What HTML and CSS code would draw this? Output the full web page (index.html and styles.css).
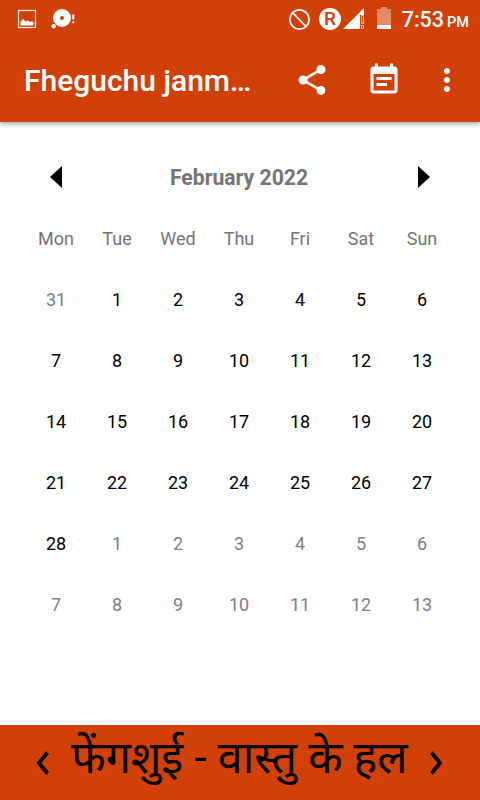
FILE: index.html
```html
<!DOCTYPE html>
<html lang="hi">
<head>
  <meta charset="UTF-8" />
  <meta name="viewport" content="width=device-width, initial-scale=1.0"/>
  <title>Fheguchu janm</title>
  <link rel="stylesheet" href="styles.css">
</head>
<body>

  <header class="header">
    <!-- STATUS BAR -->
    <div class="status-bar">
      <svg class="status-left" width="64" height="38" viewBox="0 0 64 38">
        <rect x="2.500" y="10.500" width="17" height="17" fill="none" stroke="#fff" stroke-opacity=".9" stroke-width="1.200"/>
        <path d="M4.500 25.500V21.500L7 19l2.500 2.500 2.500-1 2 1.500 2-1 1.500 1.500v3z" fill="#fff"/>
        <circle cx="46" cy="18" r="5.500" fill="none" stroke="#fff" stroke-width="7"/>
        <circle cx="37.700" cy="26.300" r="2.200" fill="#fff"/>
        <path d="M57.300 14.500v5M57.300 21.200v2" stroke="#fff" stroke-width="2"/>
      </svg>
      <div class="status-right">
        <svg width="107" height="38" viewBox="0 0 107 38">
          <circle cx="14.500" cy="19.500" r="9.600" fill="none" stroke="#fff" stroke-width="1.800"/>
          <path d="M8 13l13 13.500" stroke="#fff" stroke-width="1.800"/>
          <circle cx="45" cy="19" r="11" fill="#fff"/>
          <text class="roaming" x="45" y="25" text-anchor="middle">R</text>
          <path d="M58 29L79 8v7h-4v14z" fill="#fff"/>
          <path d="M76.500 15.500h2v8h-2zM76.500 25.500h2v3h-2z" fill="#d04007" stroke="#fff" stroke-opacity=".75" stroke-width="1"/>
          <path d="M92 9h4V7h6v2h4v16H92z" fill="#fff" fill-opacity=".4"/>
          <path d="M92 25h14v4H92z" fill="#fff"/>
        </svg>
        <span class="clock">7:53</span>
        <span class="period">PM</span>
      </div>
    </div>

    <!-- TOOLBAR -->
    <div class="toolbar">
      <h1 class="title">Fheguchu janm…</h1>
      <svg class="icon" width="36" height="36" viewBox="0 0 24 24">
        <path d="M18 16.080c-.76 0-1.440.3-1.960.77L8.910 12.700c.05-.23.090-.46.090-.7s-.04-.47-.09-.7l7.050-4.110c.54.5 1.250.81 2.040.81 1.660 0 3-1.340 3-3s-1.340-3-3-3-3 1.340-3 3c0 .24.040.47.090.7L8.040 9.810C7.500 9.310 6.790 9 6 9c-1.660 0-3 1.340-3 3s1.340 3 3 3c.79 0 1.500-.31 2.040-.81l7.120 4.160c-.05.21-.08.43-.08.650 0 1.610 1.310 2.920 2.920 2.920s2.920-1.310 2.920-2.920-1.310-2.920-2.920-2.920z"/>
      </svg>
      <svg class="icon" width="36" height="36" viewBox="0 0 24 24">
        <path d="M17 10H7v2h10v-2zm2-7h-1V1h-2v2H8V1H6v2H5c-1.110 0-1.990.9-1.990 2L3 19c0 1.100.89 2 2 2h14c1.100 0 2-.9 2-2V5c0-1.100-.9-2-2-2zm0 16H5V8h14v11zm-5-5H7v2h7v-2z"/>
      </svg>
      <svg class="icon more" width="36" height="36" viewBox="0 0 24 24">
        <path d="M12 8c1.100 0 2-.9 2-2s-.9-2-2-2-2 .9-2 2 .9 2 2 2zm0 2c-1.100 0-2 .9-2 2s.9 2 2 2 2-.9 2-2-.9-2-2-2zm0 6c-1.100 0-2 .9-2 2s.9 2 2 2 2-.9 2-2-.9-2-2-2z"/>
      </svg>
    </div>
  </header>

  <!-- CALENDAR -->
  <main class="calendar">
    <div class="month-bar">
      <svg width="12" height="22" viewBox="0 0 12 22"><path d="M12 0v22L0 11z"/></svg>
      <h2 class="month">February 2022</h2>
      <svg width="12" height="22" viewBox="0 0 12 22"><path d="M0 0v22l12-11z"/></svg>
    </div>

    <div class="days">
      <span class="weekday">Mon</span>
      <span class="weekday">Tue</span>
      <span class="weekday">Wed</span>
      <span class="weekday">Thu</span>
      <span class="weekday">Fri</span>
      <span class="weekday">Sat</span>
      <span class="weekday">Sun</span>

      <span class="other">31</span>
      <span>1</span><span>2</span><span>3</span><span>4</span><span>5</span><span>6</span>
      <span>7</span><span>8</span><span>9</span><span>10</span><span>11</span><span>12</span><span>13</span>
      <span>14</span><span>15</span><span>16</span><span>17</span><span>18</span><span>19</span><span>20</span>
      <span>21</span><span>22</span><span>23</span><span>24</span><span>25</span><span>26</span><span>27</span>
      <span>28</span>
      <span class="other">1</span>
      <span class="other">2</span>
      <span class="other">3</span>
      <span class="other">4</span>
      <span class="other">5</span>
      <span class="other">6</span>
      <span class="other">7</span>
      <span class="other">8</span>
      <span class="other">9</span>
      <span class="other">10</span>
      <span class="other">11</span>
      <span class="other">12</span>
      <span class="other">13</span>
    </div>
  </main>

  <!-- BOTTOM BAR -->
  <footer class="footer">
    <svg class="chevron" width="13" height="24" viewBox="0 0 13 24"><path d="M11.500 1.500L3 12l8.500 10.500"/></svg>
    <span class="topic">फेंगशुई - वास्तु के हल</span>
    <svg class="chevron" width="13" height="24" viewBox="0 0 13 24"><path d="M1.500 1.500L10 12l-8.500 10.500"/></svg>
  </footer>

</body>
</html>
```
FILE: styles.css
```css
* {
  box-sizing: border-box;
}

body {
  font-family: Roboto, "Noto Sans", sans-serif;
  background: #fff;
  margin: 0;
  height: 800px;
  display: flex;
  flex-direction: column;
  overflow: hidden;
}

svg {
  display: block;
  flex-shrink: 0;
}

.header {
  height: 122px;
  background: #d04007;
  color: white;
  box-shadow: 0 2px 4px rgba(0,0,0,0.35);
}

.status-bar {
  height: 38px;
  padding: 0 11px 0 16px;
  display: flex;
  justify-content: space-between;
}

.status-right {
  display: flex;
  align-items: baseline;
  line-height: 38px;
}

.status-right svg {
  align-self: flex-start;
  margin-right: 10px;
}

.roaming {
  font-size: 19px;
  font-weight: 500;
  fill: #d04007;
}

.clock {
  font-size: 21.5px;
  font-weight: 500;
  line-height: 40px;
}

.period {
  font-size: 14.5px;
  font-weight: 500;
  margin-left: 3px;
}

.toolbar {
  height: 84px;
  padding: 0 15px 0 24px;
  display: flex;
  align-items: center;
}

.title {
  flex: 1;
  margin: 0;
  font-size: 30px;
  font-weight: 500;
  white-space: nowrap;
}

.icon {
  fill: white;
  margin-left: 36px;
}

.more {
  margin-left: 27px;
}

.calendar {
  flex: 1;
  padding-top: 26px;
}

.month-bar {
  height: 60px;
  padding: 0 50px 2px;
  display: flex;
  align-items: center;
  justify-content: space-between;
}

.month {
  margin: 0;
  padding: 1px 2px 0 0;
  font-size: 21.2px;
  font-weight: 700;
  color: #757575;
}

.days {
  display: grid;
  grid-template-columns: repeat(7, 61px);
  grid-auto-rows: 61px;
  justify-content: center;
  padding-right: 2px;
  font-size: 18px;
  color: black;
}

.days span {
  display: flex;
  align-items: center;
  justify-content: center;
}

.days .weekday {
  color: #757575;
}

.days .other {
  color: #808080;
}

.footer {
  height: 75px;
  padding: 0 37px 0 36px;
  background: #d04007;
  display: flex;
  align-items: center;
  justify-content: space-between;
}

.topic {
  font-size: 44.7px;
  line-height: 60px;
  padding-bottom: 10px;
  white-space: nowrap;
}

.chevron {
  fill: none;
  stroke: black;
  stroke-width: 3.8;
}
```
